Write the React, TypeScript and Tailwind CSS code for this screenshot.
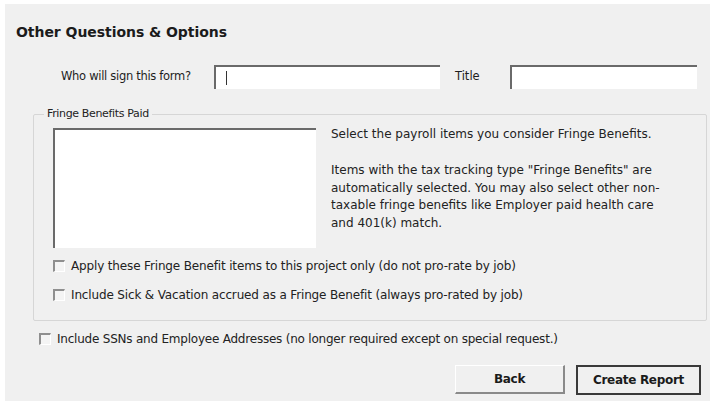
import React from "react";

const font = { fontFamily: '"DejaVu Sans", Verdana, sans-serif' };

function Box() {
  return (
    <span className="inline-block w-[12px] h-[12px] shrink-0 border-t-2 border-l-2 border-b border-r border-t-[#8f8f8f] border-l-[#8f8f8f] border-b-white border-r-white bg-[#f4f4f4]" />
  );
}

function Check({ label, tight }: { label: string; tight?: boolean }) {
  return (
    <label
      className={
        tight
          ? "flex items-center gap-[6px] text-[12px] leading-[16px] text-[#222] tracking-[-0.22px]"
          : "flex items-center gap-[6px] text-[12px] leading-[16px] text-[#222] tracking-[-0.15px]"
      }
    >
      <Box />
      <span>{label}</span>
    </label>
  );
}

export default function App() {
  return (
    <div className="w-[714px] h-[405px] bg-white pt-[4px] pl-[5px] pr-[4px] pb-[4px]" style={font}>
      <div className="h-full bg-[#f0f0f0] flex flex-col pl-[11px] pr-[3px]">
        <h1 className="mt-[19px] text-[14px] leading-[18px] font-bold text-[#1b1b1b] tracking-[-0.05px]">
          Other Questions &amp; Options
        </h1>

        <div className="mt-[24px] flex items-center h-[24px] text-[11px] text-[#1e1e1e]">
          <span className="ml-[45px] w-[153px] text-[11.5px] tracking-[-0.3px]">Who will sign this form?</span>
          <div className="w-[226px] h-[24px] bg-white border-t-2 border-l-2 border-t-[#6a6a6a] border-l-[#6a6a6a] flex items-center pl-[10px]">
            <span className="w-px h-[14px] bg-[#333]" />
          </div>
          <span className="ml-[15px] w-[55px] text-[11.5px]">Title</span>
          <div className="w-[187px] h-[24px] bg-white border-t-2 border-l-2 border-t-[#6a6a6a] border-l-[#6a6a6a]" />
        </div>

        <fieldset className="mt-[18px] ml-[17px] border border-[#d6d6d6] rounded-[2px] h-[214px]">
          <legend className="ml-[10px] px-[3px] text-[11px] text-[#222] tracking-[-0.35px] leading-[14px]">
            Fringe Benefits Paid
          </legend>
          <div className="pl-[19px] pt-[7px]">
            <div className="flex">
              <div className="w-[263px] h-[120px] bg-white border-t-2 border-l-2 border-t-[#6a6a6a] border-l-[#6a6a6a] shrink-0" />
              <div className="ml-[15px] text-[12px] leading-[17.4px] text-[#222] w-[330px]">
                <p className="-mt-[2px]">Select the payroll items you consider Fringe Benefits.</p>
                <p className="mt-[19px]">
                  Items with the tax tracking type "Fringe Benefits" are automatically selected. You may also select other non-taxable fringe benefits like Employer paid health care and 401(k) match.
                </p>
              </div>
            </div>
            <div className="mt-[10px] flex flex-col gap-[13px]">
              <Check label="Apply these Fringe Benefit items to this project only (do not pro-rate by job)" />
              <Check label="Include Sick & Vacation accrued as a Fringe Benefit (always pro-rated by job)" />
            </div>
          </div>
        </fieldset>

        <div className="mt-[10px] ml-[23px]">
          <Check tight label="Include SSNs and Employee Addresses (no longer required except on special request.)" />
        </div>

        <div className="mt-[18px] flex justify-end gap-[11px] pr-[6px]">
          <button className="w-[110px] h-[29px] border-b-2 border-r-2 border-b-[#8a8a8a] border-r-[#8a8a8a] border-t border-l border-t-white border-l-white text-[12px] font-bold text-[#1b1b1b] tracking-[-0.3px]">
            Back
          </button>
          <button className="w-[125px] h-[30px] border-2 border-[#3a3a3a] text-[12px] font-bold text-[#1b1b1b] tracking-[-0.3px]">
            Create Report
          </button>
        </div>
      </div>
    </div>
  );
}
